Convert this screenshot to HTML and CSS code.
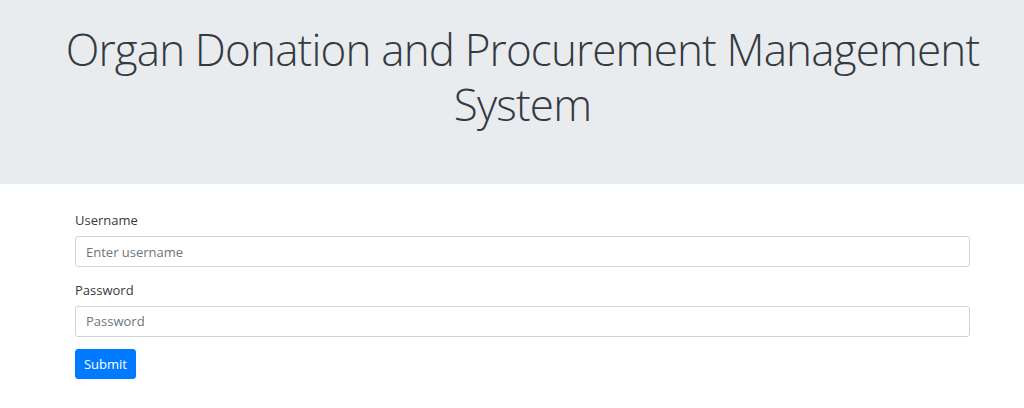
FILE: index.html
```html
<!DOCTYPE html>
<html>
<head>
<meta charset="utf-8">
<link rel="stylesheet" href="styles.css">
</head>
<body>
<header class="jumbotron">
  <h1 class="title">Organ Donation and Procurement Management System</h1>
</header>
<main class="container">
  <form class="login">
    <div class="form-group">
      <label class="label" for="u">Username</label>
      <input class="input" id="u" type="text" placeholder="Enter username">
    </div>
    <div class="form-group">
      <label class="label" for="p">Password</label>
      <input class="input" id="p" type="password" placeholder="Password">
    </div>
    <button class="btn" type="button">Submit</button>
  </form>
</main>
</body>
</html>
```

FILE: styles.css
```css
html, body {
  margin: 0;
  padding: 0;
  background: #fff;
}
body {
  font-family: "Open Sans", "Noto Sans", sans-serif;
  color: #212529;
  font-size: 13px;
  line-height: 1.5;
}
.jumbotron {
  background: #e9ecef;
  height: 184px;
  box-sizing: border-box;
  padding: 22px 0 0 21px;
  margin: 0 0 26px 0;
}
.title {
  margin: 0;
  text-align: center;
  font-weight: 300;
  font-size: 44px;
  letter-spacing: -0.85px;
  line-height: 55px;
  color: #343a40;
}
.container {
  width: 895px;
  margin-left: 75px;
}
.form-group {
  display: flex;
  flex-direction: column;
  margin-bottom: 12.5px;
}
.label {
  display: block;
  margin-bottom: 6px;
  line-height: 20px;
  color: #343a40;
}
.input {
  box-sizing: border-box;
  height: 31px;
  width: 100%;
  border: 1px solid #ced4da;
  border-radius: 3px;
  padding: 0 10px;
  font-family: inherit;
  font-size: 13px;
  color: #495057;
  background: #fff;
}
.input::placeholder {
  color: #6c757d;
}
.btn {
  height: 30px;
  width: 61px;
  background: #007bff;
  border: 1px solid #007bff;
  border-radius: 3px;
  color: #fff;
  font-family: inherit;
  font-size: 13px;
  padding: 0;
}
```
